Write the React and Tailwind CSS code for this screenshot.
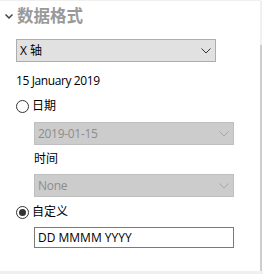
function Chevron({ className, w = 10, h = 6, sw = 1 }) {
  return (
    <svg width={w} height={h} viewBox={`0 0 ${w} ${h}`} className={className}>
      <path d={`M0.5 0.5 L${w / 2} ${h - 1} L${w - 0.5} 0.5`} fill="none" stroke="currentColor" strokeWidth={sw} />
    </svg>
  )
}

function Radio({ checked }) {
  return (
    <span className="w-[13px] h-[13px] rounded-full border border-[#333] bg-white flex items-center justify-center shrink-0">
      {checked && <span className="w-[7px] h-[7px] rounded-full bg-[#333]" />}
    </span>
  )
}

function Select({ value, disabled }) {
  return (
    <div
      className={
        disabled
          ? "h-[23px] w-[200px] flex items-center justify-between pl-[3px] pr-[4px] bg-[#cccccc] border border-[#bfbfbf] text-[#8d8d8d] tracking-[-0.3px]"
          : "h-[23px] w-[200px] flex items-center justify-between pl-[3px] pr-[4px] bg-[#e1e1e1] border border-[#adadad] text-black"
      }
    >
      <span>{value}</span>
      <Chevron className={disabled ? "text-[#a8a8a8]" : "text-[#333]"} />
    </div>
  )
}

export default function App() {
  return (
    <div
      className="w-[263px] h-[274px] bg-white flex flex-col text-[12px] text-black overflow-hidden"
      style={{ fontFamily: '"Open Sans", "Noto Sans CJK SC", sans-serif' }}
    >
      <div className="h-[1px] bg-[#f0f0f0] w-[261px] shrink-0" />
      <div className="flex flex-1 min-h-0">
        <div className="flex-1 flex flex-col">
          <div className="flex items-center h-[28px] pl-[5px] pt-[2px]">
            <Chevron className="text-[#444] mr-[4px]" w={8} h={5} sw={1.5} />
            <span className="text-[16.5px] font-bold text-[#999] leading-none">数据格式</span>
          </div>
          <div className="pl-[16px] pt-[10px] flex flex-col">
            <Select value="X 轴" />
            <div className="mt-[11px] h-[16px] leading-[16px] tracking-[-0.4px]">15 January 2019</div>
            <div className="mt-[8px] flex items-center gap-[3px] h-[18px]">
              <Radio />
              <span>日期</span>
            </div>
            <div className="pl-[18px] flex flex-col">
              <div className="mt-[7px]">
                <Select value="2019-01-15" disabled />
              </div>
              <div className="mt-[6px] h-[16px] leading-[16px]">时间</div>
              <div className="mt-[7px]">
                <Select value="None" disabled />
              </div>
            </div>
            <div className="mt-[6px] flex items-center gap-[3px] h-[18px]">
              <Radio checked />
              <span>自定义</span>
            </div>
            <div className="pl-[18px] mt-[6px]">
              <div className="h-[21px] w-[200px] border border-[#7a7a7a] bg-white flex items-center pl-[3px]">
                DD MMMM YYYY
              </div>
            </div>
          </div>
        </div>
        <div className="w-[2px] flex flex-col shrink-0">
          <div className="h-[44px] bg-[#f0f0f0]" />
          <div className="flex-1 bg-[#cdcdcd]" />
        </div>
        <div className="w-[1px]" />
      </div>
      <div className="h-[3px] bg-[#f0f0f0] shrink-0" />
    </div>
  )
}
